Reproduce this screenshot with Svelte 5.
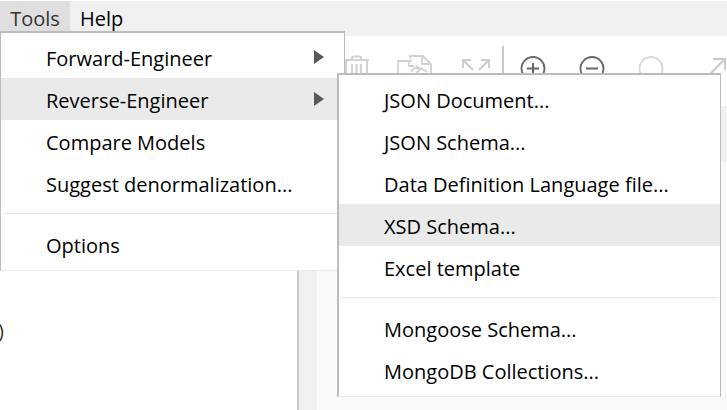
<script>
  const toolsMenu = [
    { label: 'Forward-Engineer', sub: true },
    { label: 'Reverse-Engineer', sub: true, active: true },
    { label: 'Compare Models' },
    { label: 'Suggest denormalization...' },
    null,
    { label: 'Options' }
  ];
  const reverseMenu = [
    { label: 'JSON Document...' },
    { label: 'JSON Schema...' },
    { label: 'Data Definition Language file...' },
    { label: 'XSD Schema...', active: true },
    { label: 'Excel template' },
    null,
    { label: 'Mongoose Schema...' },
    { label: 'MongoDB Collections...' }
  ];
</script>

{#snippet menu(items)}
  {#each items as item}
    {#if item}
      <button class="item" class:active={item.active} role="menuitem" aria-haspopup={item.sub ? 'menu' : undefined}>
        <span class="label">{item.label}</span>
        {#if item.sub}
          <svg width="10" height="14" viewBox="0 0 10 14"><path d="M0 0L10 7L0 14Z" fill="#595959" /></svg>
        {/if}
      </button>
    {:else}
      <div class="rule" role="separator"></div>
    {/if}
  {/each}
{/snippet}

<div class="app">
  <nav class="menubar">
    <button class="top open">Tools</button>
    <button class="top">Help</button>
  </nav>

  <div class="toolbar">
    <div class="group edit">
      <button class="tool" aria-label="Delete">
        <svg width="26" height="28" viewBox="0 0 26 28" fill="none" stroke="#d2d2d2" stroke-width="2">
          <path d="M1 5H26M9 4V3Q9 1.500 11 1.500H16Q18 1.500 18 3V4M3 6V26H24V6M9 9V22M13.500 9V22M18 9V22" />
        </svg>
      </button>
      <button class="tool" aria-label="Duplicate">
        <svg width="36" height="28" viewBox="0 0 36 28" fill="none" stroke="#d2d2d2" stroke-width="1.8">
          <path d="M13 4V1H26L34 9V24H24M25 1V9H34M15 6H1V27H22V21M12 6V11H17M14 17Q17 11 22 14M19 11L24 14L19 18M24 13L30 17" />
        </svg>
      </button>
      <button class="tool" aria-label="Expand">
        <svg width="30" height="28" viewBox="0 0 30 28" fill="none" stroke="#cfcfcf" stroke-width="2">
          <path d="M2 13V5H10M2 5L12 15M20 5H28V13M28 5L18 15M2 20V27H9M2 27L10 19M21 27H28V20M28 27L20 19" />
        </svg>
      </button>
    </div>
    <span class="divider"></span>
    <div class="group zoom">
      <button class="tool" aria-label="Zoom in">
        <svg width="26" height="28" viewBox="0 0 26 28" fill="none" stroke="#666" stroke-width="1.8">
          <circle cx="13" cy="13.500" r="11.5" /><path d="M7 13.500H19M13 8V19" stroke-width="2" />
        </svg>
      </button>
      <button class="tool" aria-label="Zoom out">
        <svg width="26" height="28" viewBox="0 0 26 28" fill="none" stroke="#666" stroke-width="1.8">
          <circle cx="13" cy="13.500" r="11.5" /><path d="M7 13.500H19" stroke-width="2" />
        </svg>
      </button>
      <button class="tool" aria-label="Reset zoom">
        <svg width="26" height="28" viewBox="0 0 26 28" fill="none" stroke="#d8d8d8" stroke-width="1.8">
          <circle cx="13" cy="13.500" r="11.5" />
        </svg>
      </button>
      <button class="tool" aria-label="Fit">
        <svg width="30" height="28" viewBox="0 0 30 28" fill="none" stroke="#cacaca" stroke-width="2">
          <path d="M16 4H28V15M28 4L10 22" />
        </svg>
      </button>
    </div>
  </div>

  <main class="work">
    <section class="tree"><span class="node">)</span></section>
    <div class="splitter"></div>
    <section class="canvas"><div class="tabs"></div></section>
  </main>

  <div class="menu tools" role="menu">{@render menu(toolsMenu)}</div>
  <div class="menu reverse" role="menu">{@render menu(reverseMenu)}</div>
</div>

<style>
  .app {
    position: relative;
    display: flex;
    flex-direction: column;
    min-height: 100vh;
    overflow: hidden;
    background: #fff;
    color: #000;
    font: 20px/24px 'Open Sans', 'Noto Sans', sans-serif;
  }
  button {
    margin: 0;
    padding: 0;
    border: 0;
    background: none;
    font: inherit;
    color: inherit;
  }
  .menubar {
    display: flex;
    align-items: flex-start;
    height: 35px;
    margin-top: 1px;
    background: #f0f0f0;
  }
  .top {
    height: 35px;
    padding: 0 10px;
  }
  .top.open {
    width: 70px;
    background: #dfdfdf;
    color: #333;
  }
  .toolbar {
    display: flex;
    align-items: flex-start;
    box-sizing: border-box;
    height: 70px;
    padding: 10px 0 0 343px;
  }
  .group {
    flex: none;
    display: flex;
    padding-top: 9px;
  }
  .edit { gap: 28px; }
  .zoom { gap: 33px; }
  .tool {
    flex: none;
    display: flex;
  }
  .divider {
    flex: none;
    width: 2px;
    height: 48px;
    margin: 0 16px 0 11px;
    background: #c8c8c8;
  }
  .work {
    flex: 1;
    display: flex;
  }
  .tree {
    flex: none;
    box-sizing: border-box;
    width: 299px;
    padding-top: 213px;
    border-right: 2px solid #c8c8c8;
  }
  .node {
    display: flex;
    justify-content: flex-end;
    width: 4px;
    color: #333;
  }
  .splitter {
    flex: none;
    width: 18px;
    background: #f0f0f0;
  }
  .canvas {
    flex: 1;
    background: #f9f9f9;
  }
  .tabs {
    height: 56px;
    background: #f0f0f0;
  }
  .menu {
    position: absolute;
    box-sizing: border-box;
    display: flex;
    flex-direction: column;
    padding: 3px 0 5px;
    background: #fff;
    border: 1px solid #bcbcbc;
    border-top-width: 2px;
    border-bottom-color: #ebebeb;
  }
  .tools {
    top: 31px;
    left: 0;
    width: 345px;
  }
  .reverse {
    top: 73px;
    left: 337px;
    width: 384px;
    border-left-width: 2px;
  }
  .item {
    display: flex;
    align-items: center;
    justify-content: space-between;
    height: 42px;
    padding: 0 20px 0 45px;
    text-align: left;
    white-space: nowrap;
  }
  .item.active { background: #eaeaea; }
  .label { padding-top: 4px; }
  .rule {
    height: 1px;
    margin: 9px 2px;
    background: #e6e6e6;
  }
</style>
